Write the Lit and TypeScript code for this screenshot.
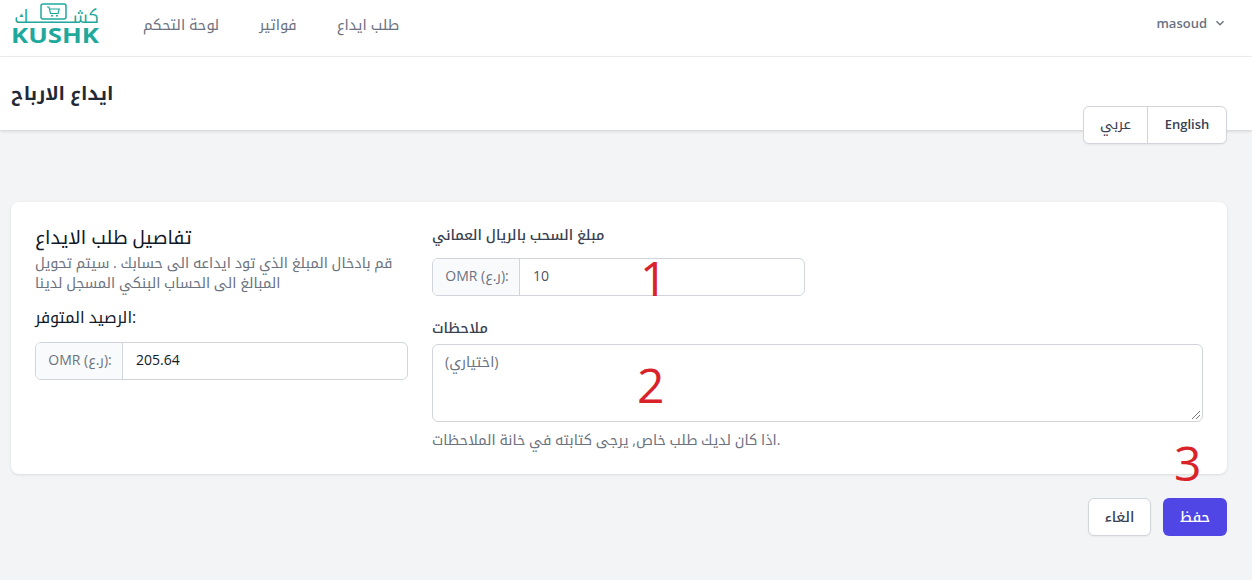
import { LitElement, html, css } from "lit";
import { customElement } from "lit/decorators.js";

@customElement("app-root")
export class AppRoot extends LitElement {
  static styles = css`
    :host { display: block; position: relative; width: 1252px; height: 580px; overflow: hidden; background: #f3f4f6; font-family: "Open Sans", "Noto Kufi Arabic", "DejaVu Sans", sans-serif; color: #111827; }
    * { box-sizing: border-box; }
    nav { height: 57px; background: #fff; border-bottom: 1px solid #f0f1f3; display: flex; align-items: center; padding: 0 27px 0 11px; }
    .logo { width: 88px; height: 50px; flex: none; margin-right: 44px; display: block; overflow: visible; }
    .links { display: flex; gap: 40px; font-size: 14.7px; line-height: 20px; color: #6b7280; margin-bottom: 9px; }
    .user { margin-left: auto; margin-bottom: 10px; display: flex; align-items: center; gap: 8px; font-size: 13px; font-weight: 600; line-height: 20px; color: #6b7280; }
    header { height: 73px; background: #fff; box-shadow: 0 1px 3px rgba(0,0,0,.16); display: flex; align-items: center; padding: 0 0 2px 11px; }
    h1 { margin: 0; font-size: 18.6px; line-height: 28px; font-weight: 700; color: #1f2937; }
    .lang { position: absolute; left: 1083px; top: 106px; width: 144px; height: 38px; display: flex; background: #fff; border: 1px solid #d1d5db; border-radius: 6px; box-shadow: 0 1px 2px rgba(0,0,0,.06); font-size: 13px; }
    .lang span { display: flex; align-items: center; justify-content: center; color: #374151; padding-bottom: 2px; }
    .lang .ar { width: 64px; border-right: 1px solid #d1d5db; font-size: 14.4px; }
    .lang .en { flex: 1; font-weight: 600; }
    main { padding: 72px 25px 0 11px; }
    .card { height: 272px; background: #fff; border-radius: 8px; box-shadow: 0 1px 3px rgba(0,0,0,.1); padding: 24px; display: grid; grid-template-columns: 373px 771px; gap: 24px; }
    h2 { margin: -1px 0 4px; font-size: 18.8px; font-weight: 400; line-height: 24px; color: #111827; }
    .desc { margin: 0; font-size: 14.4px; line-height: 20px; color: #6b7280; }
    .avail { margin: 14px 0 15px; font-size: 16px; line-height: 20px; font-weight: 400; color: #111827; }
    label { display: block; margin-top: -1px; font-size: 14.3px; line-height: 20px; font-weight: 500; color: #374151; }
    .group { display: flex; height: 38px; border: 1px solid #d1d5db; border-radius: 6px; font-size: 14px; line-height: 20px; overflow: hidden; background: #fff; }
    .group .pre { width: 87px; flex: none; background: #f9fafb; border-right: 1px solid #d1d5db; color: #6b7280; display: flex; align-items: center; justify-content: center; white-space: nowrap; padding: 0 0 2px 2px; }
    .group .val { flex: 1; display: flex; align-items: center; padding: 0 0 2px 13px; }
    .w { width: 373px; margin-top: 13px; }
    .w .val { color: #4b5563; }
    .notes-label { margin-top: 22px; }
    .area { height: 78px; margin-top: 6px; border: 1px solid #d1d5db; border-radius: 6px; padding: 7px 12px; font-size: 14.4px; line-height: 20px; color: #6b7280; position: relative; }
    .grip { position: absolute; right: 1px; bottom: 1px; width: 10px; height: 10px; }
    .hint { margin: 8px 0 0; font-size: 14.4px; line-height: 20px; color: #6b7280; }
    .actions { display: flex; justify-content: flex-end; gap: 12px; margin-top: 24px; }
    .btn { height: 38px; border-radius: 6px; font-size: 14.4px; line-height: 20px; font-weight: 500; display: flex; align-items: center; justify-content: center; }
    .cancel { width: 63px; background: #fff; border: 1px solid #d1d5db; color: #374151; box-shadow: 0 1px 2px rgba(0,0,0,.05); }
    .save { width: 64px; background: #4f46e5; color: #fff; }
    .mark { position: absolute; font-family: "Open Sans", sans-serif; font-size: 48px; line-height: 60px; color: #d9222a; }
    .m1 { left: 640px; top: 248px; }
    .m2 { left: 637px; top: 355px; }
    .m3 { left: 1174px; top: 433px; }
  `;

  render() {
    return html`
      <nav>
        <svg class="logo" viewBox="0 0 88 50" aria-label="Kushk">
          <rect x="30" y="1" width="25" height="15" rx="2" fill="none" stroke="#1fa99c" stroke-width="1.5" />
          <path d="M36 4h2l1.5 6.5h7.5l1.2-4.5H38.5" fill="none" stroke="#1fa99c" stroke-width="1.2" />
          <circle cx="41" cy="12.7" r="1" fill="#1fa99c" />
          <circle cx="46" cy="12.7" r="1" fill="#1fa99c" />
          <text x="88" y="20" text-anchor="start" direction="rtl" font-family="Noto Kufi Arabic, sans-serif" font-size="18" fill="#1fa99c">كشــــــــــــــك</text>
          <text x="0" y="40" font-family="Open Sans, sans-serif" font-size="22" font-weight="700" fill="#1fa99c" textLength="88" lengthAdjust="spacingAndGlyphs">KUSHK</text>
        </svg>
        <div class="links"><span>لوحة التحكم</span><span>فواتير</span><span>طلب ايداع</span></div>
        <div class="user">masoud
          <svg width="10" height="10" viewBox="0 0 10 10"><path d="M1.5 3.2 5 6.8l3.5-3.6" fill="none" stroke="#6b7280" stroke-width="1.4" /></svg>
        </div>
      </nav>
      <header><h1>ايداع الارباح</h1></header>
      <div class="lang"><span class="ar">عربي</span><span class="en">English</span></div>
      <main>
        <section class="card">
          <div>
            <h2>تفاصيل طلب الايداع</h2>
            <p class="desc">قم بادخال المبلغ الذي تود ايداعه الى حسابك . سيتم تحويل المبالغ الى الحساب البنكي المسجل لدينا</p>
            <p class="avail">الرصيد المتوفر:</p>
            <div class="group"><span class="pre">OMR (ر.ع):</span><span class="val">205.64</span></div>
          </div>
          <div>
            <label>مبلغ السحب بالريال العماني</label>
            <div class="group w"><span class="pre">OMR (ر.ع):</span><span class="val">10</span></div>
            <label class="notes-label">ملاحظات</label>
            <div class="area">(اختياري)
              <svg class="grip" viewBox="0 0 10 10"><path d="M1 9 9 1M5 9l4-4" stroke="#777" stroke-width="1" /></svg>
            </div>
            <p class="hint">اذا كان لديك طلب خاص, يرجى كتابته في خانة الملاحظات.</p>
          </div>
        </section>
        <div class="actions">
          <div class="btn cancel">الغاء</div>
          <div class="btn save">حفظ</div>
        </div>
      </main>
      <span class="mark m1">1</span><span class="mark m2">2</span><span class="mark m3">3</span>
    `;
  }
}
